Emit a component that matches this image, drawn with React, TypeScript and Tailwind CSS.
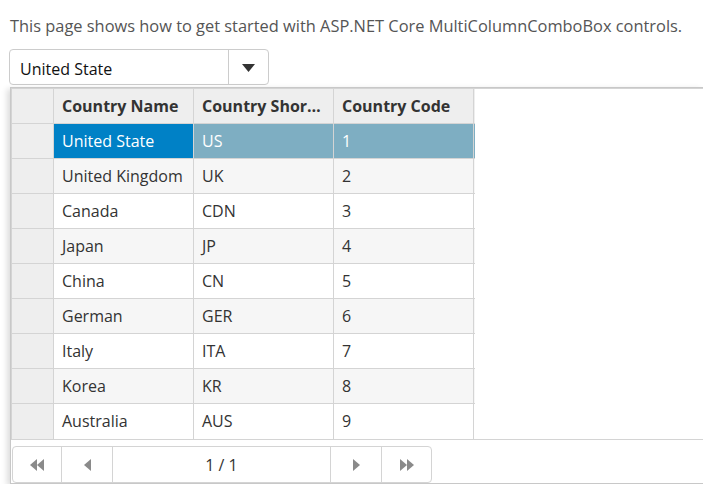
import React from "react";

type Country = { name: string; short: string; code: number };

const countries: Country[] = [
  { name: "United State", short: "US", code: 1 },
  { name: "United Kingdom", short: "UK", code: 2 },
  { name: "Canada", short: "CDN", code: 3 },
  { name: "Japan", short: "JP", code: 4 },
  { name: "China", short: "CN", code: 5 },
  { name: "German", short: "GER", code: 6 },
  { name: "Italy", short: "ITA", code: 7 },
  { name: "Korea", short: "KR", code: 8 },
  { name: "Australia", short: "AUS", code: 9 },
];

const font = { fontFamily: "'Open Sans', 'Noto Sans', sans-serif" };

const Tri: React.FC<{ dir: "left" | "right"; double?: boolean }> = ({ dir, double }) => {
  const one = dir === "left" ? "M7 0 L7 12 L0 6 Z" : "M0 0 L0 12 L7 6 Z";
  const two = dir === "left" ? "M14 0 L14 12 L7 6 Z" : "M7 0 L7 12 L14 6 Z";
  return (
    <svg width={double ? 14 : 7} height={12} viewBox={double ? "0 0 14 12" : "0 0 7 12"}>
      <path d={one} fill="#8a8a8a" />
      {double && <path d={two} fill="#8a8a8a" />}
    </svg>
  );
};

const App: React.FC = () => {
  return (
    <div className="w-[703px] h-[484px] overflow-hidden bg-white" style={font}>
      <p className="pt-[14px] pl-[10px] text-[16.4px] leading-[24px] text-[#555]">
        This page shows how to get started with ASP.NET Core MultiColumnComboBox controls.
      </p>

      {/* combo input */}
      <div className="mt-[11px] ml-[9px] flex h-[36px] w-[260px] rounded-[4px] border border-[#ccc] bg-white">
        <div className="flex flex-1 items-center pt-[3px] pl-[10px] text-[16px] text-[#111]">United State</div>
        <div className="flex w-[40px] items-center justify-center border-l border-[#ccc] pt-[2px]">
          <svg width="13" height="8" viewBox="0 0 13 8">
            <path d="M0 0 L13 0 L6.5 8 Z" fill="#333" />
          </svg>
        </div>
      </div>

      {/* dropdown popup */}
      <div className="mt-[2px] ml-[10px] flex h-[397px] flex-col border-t border-l border-b border-[#c8c8c8] bg-white shadow-[-3px_2px_6px_rgba(0,0,0,0.14)]">
        <div className="border-t border-b border-[#d4d4d4]">
          <div className="flex w-[464px] text-[16px] text-[#333]">
            <div className="flex w-[43px] flex-col border-r border-l border-[#d4d4d4] bg-[#eee]">
              {Array.from({ length: 10 }).map((_, i) => (
                <div key={i} className="h-[35px] border-b border-[#d4d4d4] last:border-b-0 last:h-[34px]" />
              ))}
            </div>
            <div className="flex-1">
              <div className="grid h-[35px] grid-cols-[140px_140px_140px] border-b border-[#d4d4d4] bg-[#eee] font-bold">
                <div className="truncate border-r border-[#d4d4d4] px-[8px] leading-[34px]">Country Name</div>
                <div className="truncate border-r border-[#d4d4d4] px-[8px] leading-[34px]">Country Short Name</div>
                <div className="truncate border-r border-[#d4d4d4] px-[8px] leading-[34px]">Country Code</div>
              </div>
              {countries.map((c, i) => {
                const selected = i === 0;
                const rowBg = selected ? "bg-[#7eaec2] text-white" : i % 2 === 1 ? "bg-[#f6f6f6]" : "bg-white";
                return (
                  <div
                    key={c.code}
                    className={`grid h-[35px] grid-cols-[140px_140px_140px] ${i < 8 ? "border-b" : ""} border-[#d4d4d4] ${rowBg}`}
                  >
                    <div
                      className={`truncate border-r border-[#d4d4d4] px-[8px] leading-[34px] ${selected ? "bg-[#0081c6]" : ""}`}
                    >
                      {c.name}
                    </div>
                    <div className="truncate border-r border-[#d4d4d4] px-[8px] leading-[34px]">{c.short}</div>
                    <div className="truncate border-r border-[#d4d4d4] px-[8px] leading-[34px]">{c.code}</div>
                  </div>
                );
              })}
            </div>
          </div>
        </div>

        {/* pager */}
        <div className="mt-[6px] ml-px flex h-[37px] w-[420px] rounded-[4px] border border-[#d4d4d4] text-[16px] text-[#333]">
          <div className="flex w-[49px] items-center justify-center border-r border-[#d4d4d4]">
            <Tri dir="left" double />
          </div>
          <div className="flex w-[51px] items-center justify-center border-r border-[#d4d4d4]">
            <Tri dir="left" />
          </div>
          <div className="flex flex-1 items-center justify-center border-r border-[#d4d4d4]">1 / 1</div>
          <div className="flex w-[51px] items-center justify-center border-r border-[#d4d4d4]">
            <Tri dir="right" />
          </div>
          <div className="flex w-[49px] items-center justify-center">
            <Tri dir="right" double />
          </div>
        </div>
      </div>
    </div>
  );
};

export default App;
